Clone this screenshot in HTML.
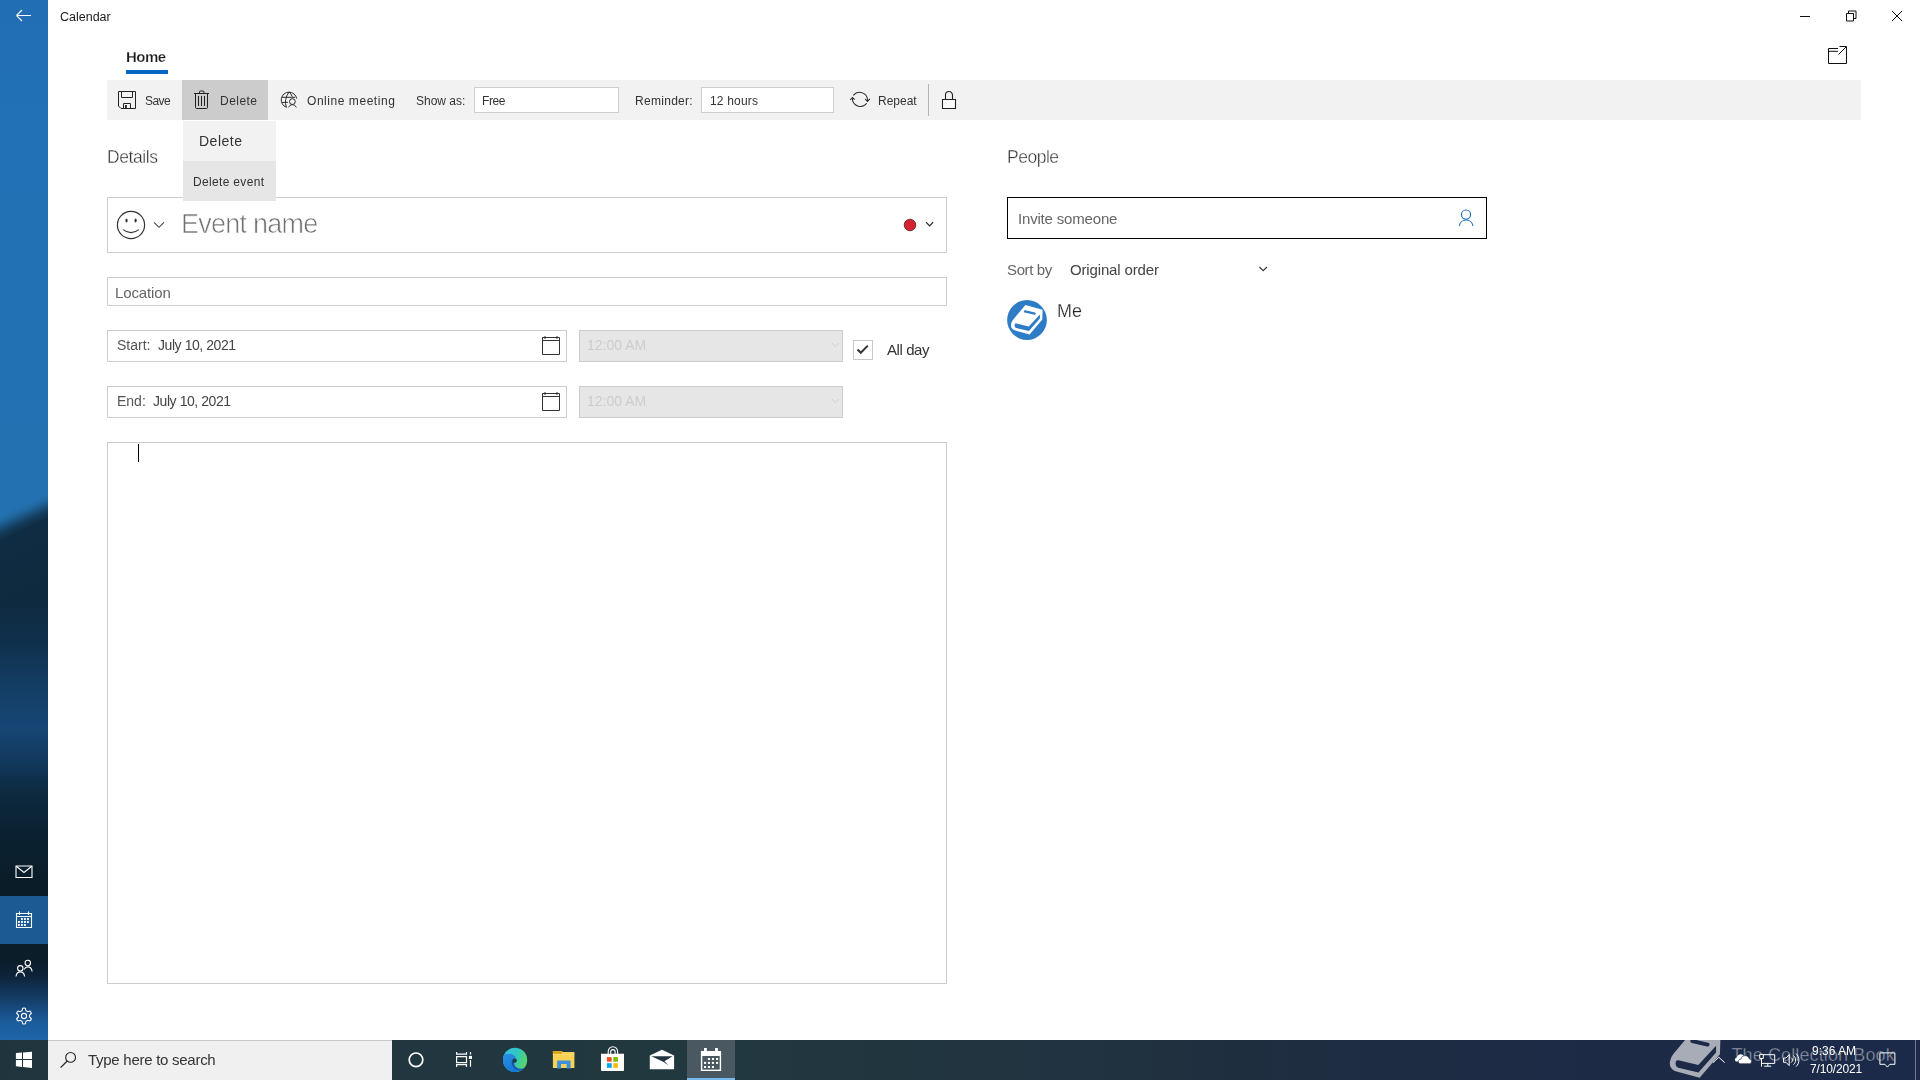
<!DOCTYPE html>
<html><head><meta charset="utf-8">
<style>
*{margin:0;padding:0;box-sizing:border-box}
html,body{width:1920px;height:1080px;overflow:hidden;background:#fff;font-family:"Liberation Sans",sans-serif;color:#333}
.a{position:absolute;white-space:nowrap;line-height:1;will-change:transform}
svg{position:absolute;overflow:visible}
#side{position:absolute;left:0;top:0;width:48px;height:1040px;
background:linear-gradient(180deg,#216eb5 0px,#2271b4 300px,#2371b0 496px,#2068a0 506px,#1a5480 514px,#123857 524px,#0f2c43 536px,#0e2a40 600px,#0f2f4a 640px,#133c62 680px,#164674 728px,#12395e 760px,#0d2a40 792px,#0b2232 830px,#0a1c28 880px,#0b1d29 960px,#0d2238 975px,#143f6a 1000px,#1b5c9c 1022px,#1f65a8 1040px)}
#calsel{position:absolute;left:0;top:896px;width:48px;height:48px;background:#1c5a94}
#tb{position:absolute;left:0;top:1040px;width:1920px;height:40px;background:linear-gradient(90deg,#20343e 0px,#22383f 700px,#213440 1000px,#1f2e3f 1250px,#1d2b45 1500px,#1c2a4a 1920px)}
.box{position:absolute;border:1px solid #cdcdcd;background:#fff}
</style></head><body>
<div id="side"></div>
<div class="a" style="left:0;top:440px;width:48px;height:160px;background:linear-gradient(155deg,#2371b0 0px,#2371b0 69px,#2068a0 74px,#1a5480 79px,#133a58 85px,#0f2c42 92px,#0e2a3f 165px)"></div>
<div id="calsel"></div>

<!-- back arrow -->
<svg style="left:0;top:0" width="48" height="32" viewBox="0 0 48 32">
<path d="M16.5 15.5H31M16.5 15.5L22 10M16.5 15.5L22 21" stroke="#fff" stroke-width="1.1" fill="none"/>
</svg>
<div class="a" style="left:60px;top:11px;font-size:12.5px;color:#1a1a1a">Calendar</div>

<!-- window buttons -->
<svg style="left:1790px;top:0" width="130" height="32" viewBox="1790 0 130 32">
<path d="M1800 16.5H1810" stroke="#111" stroke-width="1"/>
<path d="M1846.5 13.5h7v7.5h-7z M1848.5 13.5v-2.5h7.5v7.5h-2" stroke="#111" stroke-width="1" fill="none"/>
<path d="M1892 11L1902 21M1902 11L1892 21" stroke="#111" stroke-width="1"/>
</svg>

<!-- Home tab -->
<div class="a" style="left:126px;top:49px;font-size:15px;letter-spacing:-0.5px;font-weight:bold;color:#1a1a1a;-webkit-text-stroke:0.25px #fff">Home</div>
<div class="a" style="left:126px;top:70px;width:42px;height:4px;background:#0067c0"></div>

<!-- popout icon -->
<svg style="left:1820px;top:40px" width="40" height="30" viewBox="1820 40 40 30">
<path d="M1828.5 48.5V63.5H1846.5V46.5M1828.5 48.5H1838M1828.5 51.3H1838M1838.5 54.5L1846 47M1839.5 46.5H1846.5" stroke="#111" stroke-width="1" fill="none"/>
</svg>

<!-- toolbar -->
<div class="a" style="left:107px;top:80px;width:1754px;height:40px;background:#f2f2f2"></div>
<div class="a" style="left:182px;top:80px;width:86px;height:40px;background:#cccccc"></div>

<!-- toolbar icons -->
<svg style="left:110px;top:85px" width="110" height="30" viewBox="110 85 110 30">
<path d="M118.5 91.5H135.5V108.5H121L118.5 106V91.5Z" stroke="#222" stroke-width="1" fill="none"/>
<path d="M121.5 91.5V97.5H132.5V91.5" stroke="#222" stroke-width="1" fill="none"/>
<path d="M123.5 108.5V103.5H130.5V108.5" stroke="#222" stroke-width="1" fill="none"/>
<rect x="125" y="105" width="1.8" height="3.5" fill="#222"/>
</svg>
<svg style="left:190px;top:85px" width="30" height="30" viewBox="190 85 30 30">
<path d="M194 93.5H209M199.5 93.5V92a1 1 0 0 1 1-1h2.5a1 1 0 0 1 1 1v1.5" stroke="#222" stroke-width="1" fill="none"/>
<path d="M195.5 93.5V107.5a1 1 0 0 0 1 1h10a1 1 0 0 0 1-1V93.5" stroke="#222" stroke-width="1" fill="none"/>
<path d="M198.5 96V106M201.5 96V106M204.5 96V106" stroke="#222" stroke-width="1"/>
</svg>
<div class="a" style="left:145px;top:95px;font-size:12px;letter-spacing:-0.6px;color:#333">Save</div>
<div class="a" style="left:220px;top:95px;font-size:12px;letter-spacing:0.47px;color:#333">Delete</div>

<!-- online meeting -->
<svg style="left:278px;top:88px" width="24" height="24" viewBox="0 0 24 24">
<g stroke="#2a2a2a" stroke-width="1" fill="none">
<path d="M18.7 10.6A7.8 7.8 0 1 0 8.4 19.3"/>
<path d="M4 9.3H17M4 14.4H9.9"/>
<path d="M11 4Q5.6 11.5 8.4 19.3M11 4Q13.4 6 14.3 8.6"/>
<circle cx="14.4" cy="13.6" r="2.9"/>
<path d="M10.4 19.4Q11.9 16.6 14.4 16.6T18.4 19.4"/>
</g>
</svg>
<div class="a" style="left:307px;top:95px;font-size:12px;letter-spacing:0.55px;color:#333">Online meeting</div>
<div class="a" style="left:416px;top:95px;font-size:12px;color:#333">Show as:</div>
<div class="box" style="left:474px;top:87px;width:145px;height:26px;border-color:#cfcfcf"></div>
<div class="a" style="left:482px;top:95px;font-size:12px;letter-spacing:-0.43px;color:#333">Free</div>
<div class="a" style="left:635px;top:95px;font-size:12px;letter-spacing:0.29px;color:#333">Reminder:</div>
<div class="box" style="left:701px;top:87px;width:133px;height:26px;border-color:#cfcfcf"></div>
<div class="a" style="left:710px;top:95px;font-size:12px;letter-spacing:0.19px;color:#333">12 hours</div>

<!-- repeat -->
<svg style="left:848px;top:88px" width="24" height="24" viewBox="0 0 24 24">
<g stroke="#2a2a2a" stroke-width="1.05" fill="none">
<path d="M5.3 7.3A8 8 0 0 1 19.5 12.8"/>
<path d="M18.7 15.3A8 8 0 0 1 4.4 10.2"/>
<path d="M17.2 11.1L19.5 13.4L21.8 10.9M2.2 12L4.4 9.6L6.7 11.6"/>
</g>
</svg>
<div class="a" style="left:878px;top:95px;font-size:12px;color:#333">Repeat</div>
<div class="a" style="left:928px;top:84px;width:1px;height:32px;background:#b4b4b4"></div>
<svg style="left:935px;top:85px" width="30" height="30" viewBox="935 85 30 30">
<path d="M942.5 99.5h13v9h-13z" stroke="#222" stroke-width="1.1" fill="#fafafa"/>
<path d="M945.5 99.5v-4.5a3.5 3.5 0 0 1 7 0v4.5" stroke="#222" stroke-width="1.1" fill="none"/>
</svg>


<!-- Event name box -->
<div class="box" style="left:107px;top:197px;width:840px;height:56px"></div>
<svg style="left:110px;top:205px" width="60" height="40" viewBox="110 205 60 40">
<circle cx="131" cy="225" r="13.6" stroke="#333" stroke-width="1.2" fill="none"/>
<ellipse cx="126.5" cy="220.6" rx="1.1" ry="2" fill="#333"/>
<ellipse cx="135.6" cy="220.6" rx="1.1" ry="2" fill="#333"/>
<path d="M123.2 229.6Q131 235.8 138.8 229.6" stroke="#333" stroke-width="1.2" fill="none"/>
<path d="M154 222.3l5 5 5-5" stroke="#444" stroke-width="1.1" fill="none"/>
</svg>
<div class="a" style="left:181px;top:211px;font-size:27px;letter-spacing:-0.75px;color:#707070;-webkit-text-stroke:0.65px #fff">Event name</div>
<svg style="left:895px;top:210px" width="50" height="30" viewBox="895 210 50 30">
<circle cx="910" cy="225" r="5.8" fill="#d2232f" stroke="#5a1a1e" stroke-width="0.8"/>
<path d="M926 222.2l3.6 3.6 3.6-3.6" stroke="#222" stroke-width="1.2" fill="none"/>
</svg>

<!-- Location -->
<div class="box" style="left:107px;top:277px;width:840px;height:29px"></div>
<div class="a" style="left:115px;top:285px;font-size:15px;letter-spacing:-0.12px;color:#666">Location</div>

<!-- Start / End -->
<div class="box" style="left:107px;top:330px;width:460px;height:32px"></div>
<div class="a" style="left:117px;top:338px;font-size:14px;color:#555">Start:</div>
<div class="a" style="left:158px;top:338px;font-size:14px;letter-spacing:-0.43px;color:#444">July 10, 2021</div>
<div class="box" style="left:107px;top:386px;width:460px;height:32px"></div>
<div class="a" style="left:117px;top:394px;font-size:14px;color:#555">End:</div>
<div class="a" style="left:153px;top:394px;font-size:14px;letter-spacing:-0.43px;color:#444">July 10, 2021</div>
<svg style="left:535px;top:330px" width="30" height="90" viewBox="535 330 30 90">
<path d="M542.5 337.5h17v17h-17zM542.5 340.5h17M545 336v3M557 336v3" stroke="#333" stroke-width="1" fill="none"/>
<path d="M542.5 393.5h17v17h-17zM542.5 396.5h17M545 392v3M557 392v3" stroke="#333" stroke-width="1" fill="none"/>
</svg>
<div class="box" style="left:579px;top:330px;width:264px;height:32px;background:#e6e6e6;border-color:#cccccc"></div>
<div class="a" style="left:587px;top:338px;font-size:14px;color:#cdcdcd">12:00 AM</div>
<div class="box" style="left:579px;top:386px;width:264px;height:32px;background:#e6e6e6;border-color:#cccccc"></div>
<div class="a" style="left:587px;top:394px;font-size:14px;color:#cdcdcd">12:00 AM</div>
<svg style="left:825px;top:335px" width="20" height="80" viewBox="825 335 20 80">
<path d="M832 343l3.5 3.5 3.5-3.5M832 399l3.5 3.5 3.5-3.5" stroke="#cfcfcf" stroke-width="1" fill="none"/>
</svg>
<div class="box" style="left:853px;top:340px;width:20px;height:20px;border-color:#c8c8c8"></div>
<svg style="left:850px;top:337px" width="26" height="26" viewBox="850 337 26 26">
<path d="M857.5 349.5l3.3 3.3 7-7.2" stroke="#333" stroke-width="2" fill="none"/>
</svg>
<div class="a" style="left:887px;top:342px;font-size:15px;letter-spacing:-0.42px;color:#333">All day</div>

<!-- Notes -->
<div class="box" style="left:107px;top:442px;width:840px;height:542px"></div>
<div class="a" style="left:138px;top:444px;width:1.2px;height:18px;background:#000"></div>

<!-- People -->
<div class="a" style="left:1007px;top:149px;font-size:17.5px;letter-spacing:-0.48px;color:#333;-webkit-text-stroke:0.35px #fff">People</div>
<div class="a" style="left:1007px;top:197px;width:480px;height:42px;border:1px solid #000"></div>
<div class="a" style="left:1018px;top:211px;font-size:15px;letter-spacing:-0.18px;color:#666">Invite someone</div>
<svg style="left:1450px;top:205px" width="30" height="30" viewBox="1450 205 30 30">
<circle cx="1466" cy="214.6" r="4.6" stroke="#1a6fc0" stroke-width="1.1" fill="none"/>
<path d="M1459.3 225.8a6.9 6.9 0 0 1 13.6 0" stroke="#1a6fc0" stroke-width="1.1" fill="none"/>
</svg>
<div class="a" style="left:1007px;top:262px;font-size:15px;letter-spacing:-0.37px;color:#666">Sort by</div>
<div class="a" style="left:1070px;top:262px;font-size:15px;letter-spacing:-0.15px;color:#444">Original order</div>
<svg style="left:1250px;top:260px" width="20" height="20" viewBox="1250 260 20 20">
<path d="M1259.5 267l3.7 3.7 3.7-3.7" stroke="#333" stroke-width="1.1" fill="none"/>
</svg>
<svg style="left:1005px;top:298px" width="44" height="44" viewBox="0 0 44 44">
<circle cx="22" cy="22" r="19.9" fill="#2e7bc6"/>
<path d="M20.4 6.9L37.6 11.8L37.3 21.6L24.6 36.4L9.6 32.3Q5.6 30.8 6 26.5Q6.4 23.5 8.3 21.4Z" fill="#fff"/>
<path d="M9.6 27.2Q9.6 25.1 11.4 25.4L23.8 28.4L34.9 16.4L34.9 20.6L23.9 33.1L11.2 30.1Q9.6 29.7 9.6 27.2Z" fill="#2e7bc6"/>
<path d="M20 13.4L29.6 15.6" stroke="#2e7bc6" stroke-width="2.4" stroke-linecap="round"/>
</svg>
<div class="a" style="left:1057px;top:302px;font-size:18px;color:#222;-webkit-text-stroke:0.25px #fff">Me</div>

<!-- delete menu -->
<div class="a" style="left:183px;top:121px;width:93px;height:40px;background:#f2f2f2"></div>
<div class="a" style="left:183px;top:161px;width:93px;height:40px;background:#e6e6e6"></div>
<div class="a" style="left:199px;top:134px;font-size:14px;letter-spacing:0.5px;color:#333">Delete</div>
<div class="a" style="left:193px;top:176px;font-size:12px;letter-spacing:0.33px;color:#333">Delete event</div>

<!-- Details -->
<div class="a" style="left:107px;top:149px;font-size:17.5px;letter-spacing:-0.4px;color:#333;-webkit-text-stroke:0.35px #fff">Details</div>

<!-- sidebar icons -->
<svg style="left:0;top:850px" width="48" height="190" viewBox="0 850 48 190">
<path d="M16 866h16v11.5H16z" stroke="#fff" stroke-width="1.1" fill="none"/>
<path d="M16.3 866.3L24 872.5l7.7-6.2" stroke="#fff" stroke-width="1.1" fill="none"/>
<path d="M16.5 913.5h15v14h-15zM16.5 916.5h15M19.5 911.5v3.5M28.5 911.5v3.5" stroke="#fff" stroke-width="1.1" fill="none"/>
<g fill="#fff"><rect x="21" y="918" width="1.9" height="1.9"/><rect x="24" y="918" width="1.9" height="1.9"/><rect x="27" y="918" width="1.9" height="1.9"/><rect x="18" y="921" width="1.9" height="1.9"/><rect x="21" y="921" width="1.9" height="1.9"/><rect x="24" y="921" width="1.9" height="1.9"/><rect x="27" y="921" width="1.9" height="1.9"/><rect x="18" y="924" width="1.9" height="1.9"/><rect x="21" y="924" width="1.9" height="1.9"/><rect x="24" y="924" width="1.9" height="1.9"/></g>
<circle cx="20.3" cy="968.3" r="2.7" stroke="#fff" stroke-width="1.1" fill="none"/>
<path d="M16 976.5c.4-3 2-4.6 4.3-4.6s3.9 1.6 4.3 4.6" stroke="#fff" stroke-width="1.1" fill="none"/>
<circle cx="27.8" cy="963" r="2.7" stroke="#fff" stroke-width="1.1" fill="none"/>
<path d="M24.2 969.5c.8-1.8 2-2.6 3.6-2.6 2.3 0 3.9 1.6 4.3 4.6" stroke="#fff" stroke-width="1.1" fill="none"/>
<path d="M22.68 1008.21 A7.9 7.9 0 0 1 25.32 1008.21 L25.95 1010.75 A5.6 5.6 0 0 1 27.57 1011.69 L30.09 1010.96 A7.9 7.9 0 0 1 31.40 1013.25 L29.52 1015.07 A5.6 5.6 0 0 1 29.52 1016.93 L31.40 1018.75 A7.9 7.9 0 0 1 30.09 1021.04 L27.57 1020.31 A5.6 5.6 0 0 1 25.95 1021.25 L25.32 1023.79 A7.9 7.9 0 0 1 22.68 1023.79 L22.05 1021.25 A5.6 5.6 0 0 1 20.43 1020.31 L17.91 1021.04 A7.9 7.9 0 0 1 16.60 1018.75 L18.48 1016.93 A5.6 5.6 0 0 1 18.48 1015.07 L16.60 1013.25 A7.9 7.9 0 0 1 17.91 1010.96 L20.43 1011.69 A5.6 5.6 0 0 1 22.05 1010.75 L22.68 1008.21 Z" stroke="#fff" stroke-width="1.05" fill="none" stroke-linejoin="round"/>
<circle cx="24" cy="1016" r="2.6" stroke="#fff" stroke-width="1.1" fill="none"/>
</svg>

<!-- taskbar -->
<div id="tb"></div>
<svg style="left:0;top:1040px" width="48" height="40" viewBox="0 1040 48 40">
<path d="M15.9 1053L22 1052.5V1059.1H15.9zM23 1052.4L32 1051.8V1059.1H23zM15.9 1060H22V1067L15.9 1066.2zM23 1060H32V1068L23 1067.1z" fill="#fff"/>
</svg>
<div class="a" style="left:48px;top:1040px;width:344px;height:40px;background:#f0f0f0;border-top:1px solid #c9c9c9"></div>
<svg style="left:55px;top:1045px" width="30" height="30" viewBox="55 1045 30 30">
<circle cx="70.6" cy="1057.4" r="4.9" stroke="#222" stroke-width="1.1" fill="none"/>
<path d="M67.2 1061l-6.6 6.6" stroke="#222" stroke-width="1.2"/>
</svg>
<div class="a" style="left:88px;top:1052px;font-size:15px;letter-spacing:-0.27px;color:#333">Type here to search</div>

<svg style="left:392px;top:1040px" width="100" height="40" viewBox="392 1040 100 40">
<circle cx="416" cy="1059.8" r="6.8" stroke="#fff" stroke-width="1.7" fill="none"/>
<g stroke="#fff" stroke-width="1.2" fill="none">
<path d="M456.6 1052v2.2h9.9V1052M456.6 1066.9v-2.3h9.9v2.3M456.6 1056.6h9.9v6h-9.9z"/>
<path d="M470.5 1052v2.6M470.5 1060v6.8"/>
</g>
<rect x="468.9" y="1055.9" width="3.1" height="3.1" fill="#fff"/>
</svg>
<!-- edge -->
<svg style="left:498px;top:1044px" width="34" height="32" viewBox="0 0 34 32">
<defs>
<linearGradient id="eg1" x1="0" y1="0.2" x2="1" y2="0.6"><stop offset="0" stop-color="#36c3f0"/><stop offset=".5" stop-color="#2fc6c0"/><stop offset="1" stop-color="#5cd865"/></linearGradient>
<linearGradient id="eg2" x1="0" y1="0" x2="0.6" y2="1"><stop offset="0" stop-color="#2a8fe0"/><stop offset="1" stop-color="#1276d8"/></linearGradient>
</defs>
<circle cx="17.1" cy="15.9" r="12.1" fill="url(#eg1)"/>
<path d="M5.1 12.2C7 9.5 12.5 9 15.5 11C17.5 12.3 18.6 14.5 17.4 16.8L17 17.4C15.5 19.5 16 22.5 19 24.5C21.5 26 25 25.5 26.9 23.6C24.6 26.5 21 28 17.1 28C10.4 28 5 22.6 5 15.9C5 14.6 5.1 13.4 5.1 12.2Z" fill="url(#eg2)"/>
<path d="M13.8 17C13.2 20.5 14.8 24.3 19 25.8C22 26.8 25.3 25.9 26.9 23.6C24.5 25.2 21 25.2 18.6 23.6C16.2 22 15.6 19.6 16.4 17.6Z" fill="#1a56ac"/>
<circle cx="16.6" cy="16.6" r="2.2" fill="#1f3a48"/>
</svg>
<!-- explorer -->
<svg style="left:548px;top:1046px" width="32" height="28" viewBox="0 0 32 28">
<path d="M4.9 5.4c0-.3.2-.5.5-.5h8.2l1.4 1.1h11c.3 0 .4.2.4.4V22H4.9z" fill="#f8d254"/>
<path d="M4.9 5.4c0-.3.2-.5.5-.5h8l.6 1v2H4.9z" fill="#dea21e"/>
<path d="M4.9 7.8h21.5V9H4.9z" fill="#fbe07c" opacity=".6"/>
<path d="M9.1 22.6v-7.6c0-.3.2-.5.5-.5h12.5c.3 0 .5.2.5.5v7.6h-4v-4.5h-5.5v4.5z" fill="#3f90da"/>
</svg>
<!-- store -->
<svg style="left:596px;top:1044px" width="34" height="30" viewBox="0 0 34 30">
<path d="M12.2 10V7.5a4.7 4.7 0 0 1 9.4 0V10M14.7 10V7.8a2.2 2.2 0 0 1 4.4 0V10" stroke="#fff" stroke-width="1.1" fill="none"/>
<path d="M5 9.8h23v16.1c0 .6-.5 1-1 1H6c-.6 0-1-.4-1-1z" fill="#fff"/>
<rect x="10.9" y="13.1" width="4.8" height="4.6" fill="#f25022"/>
<rect x="17.3" y="13.1" width="4.6" height="4.6" fill="#7fba00"/>
<rect x="10.9" y="19.2" width="4.8" height="4.6" fill="#00a4ef"/>
<rect x="17.3" y="19.2" width="4.6" height="4.6" fill="#ffb900"/>
</svg>
<!-- mail -->
<svg style="left:645px;top:1044px" width="34" height="30" viewBox="645 1044 34 30">
<path d="M649.8 1055.6l12.2-5.8 12.1 5.8v13.6h-24.3z" fill="#fff"/>
<path d="M651.3 1056.2h21.3l-8.2 5.1 4.4 4.1-5.6-3.6z" fill="#223540"/>
</svg>
<!-- calendar active -->
<div class="a" style="left:687px;top:1040px;width:48px;height:40px;background:#4a5862"></div>
<div class="a" style="left:687px;top:1078px;width:48px;height:2px;background:#76b9ed"></div>
<svg style="left:694px;top:1044px" width="34" height="30" viewBox="694 1044 34 30">
<path d="M700.9 1050.9h3.1v-2.9h2.8v2.9h8.3v-2.9h2.8v2.9h3.2v20h-20.2z" fill="#fff"/>
<rect x="702.3" y="1056" width="17.4" height="13.6" fill="#4a5862"/>
<g fill="#fff">
<rect x="707.9" y="1058" width="2.1" height="2"/><rect x="711.9" y="1058" width="2.1" height="2"/><rect x="716" y="1058" width="2.1" height="2"/>
<rect x="704" y="1061.9" width="2.1" height="2"/><rect x="707.9" y="1061.9" width="2.1" height="2"/><rect x="711.9" y="1061.9" width="2.1" height="2"/><rect x="716" y="1061.9" width="2.1" height="2"/>
<rect x="704" y="1066" width="2.1" height="2"/><rect x="707.9" y="1066" width="2.1" height="2"/><rect x="711.9" y="1066" width="2.1" height="2"/>
</g>
</svg>

<!-- tray -->
<svg style="left:1660px;top:1040px" width="260" height="40" viewBox="1660 1040 260 40">
<defs><clipPath id="tbclip"><rect x="1660" y="1040" width="260" height="40"/></clipPath></defs>
<g clip-path="url(#tbclip)">
<g transform="translate(1660.24 1019.6) scale(1.6)">
<path d="M20.4 6.9L37.6 11.8L37.3 21.6L24.6 36.4L9.6 32.3Q5.6 30.8 6 26.5Q6.4 23.5 8.3 21.4Z" fill="#a7acb7"/>
<path d="M9.6 27.2Q9.6 25.1 11.4 25.4L23.8 28.4L34.9 16.4L34.9 20.6L23.9 33.1L11.2 30.1Q9.6 29.7 9.6 27.2Z" fill="#1c2a48"/>
<path d="M20 13.4L29.6 15.6" stroke="#1c2a48" stroke-width="2.4" stroke-linecap="round"/>
</g>
<text x="1731.5" y="1060.7" font-family="Liberation Sans" font-size="18" fill="#9aa2b3" stroke="#1d2b47" stroke-width="0.5" letter-spacing="0.12">The Collection Book</text>
</g>
<path d="M1713 1062.7L1718.8 1057.2L1724.7 1062.7" stroke="#fff" stroke-width="1" fill="none"/>
<path d="M1736.8 1061.6c-1.2 0-1.9-.9-1.9-1.9 0-1.1.8-2 1.9-2 .4-1.9 1.9-3.5 3.9-3.5 1.6 0 2.9.9 3.5 2.3L1744 1061.6z" fill="#fff"/>
<path d="M1740.6 1063.8c-1.4 0-2.3-1-2.3-2.3 0-1.3 1-2.3 2.3-2.3h.2c.5-2.1 2.2-3.6 4.3-3.6 2 0 3.7 1.3 4.2 3.2 1.3.2 2.3 1.3 2.3 2.6 0 1.4-1.1 2.4-2.5 2.4z" fill="#fff" stroke="#1d2b47" stroke-width="0.7"/>
<g stroke="#fff" stroke-width="1" fill="none">
<path d="M1762.5 1054.7H1774.7V1063.4H1762M1761.5 1058.5V1066.6M1767.8 1063.4V1066.2M1764.2 1066.2H1771.2"/>
<path d="M1759.7 1054.4h3.6v4.1h-3.6z" fill="#1d2b47"/>
<path d="M1783.5 1058H1786L1789.2 1054.6V1065.6L1786 1062.3H1783.5Z"/>
<path d="M1791.2 1057.6c.8.7 1.2 1.5 1.2 2.5s-.4 1.8-1.2 2.5M1793.5 1055.6c1.4 1.2 2.1 2.7 2.1 4.5s-.7 3.3-2.1 4.5M1796 1053.6c2 1.7 2.9 3.9 2.9 6.5s-1 4.8-2.9 6.5"/>
</g>
<path d="M1879.9 1052.9h15v11.4h-5l-2.5 2.8-2.5-2.8h-5z" stroke="#fff" stroke-width="1" fill="none"/>
<path d="M1915.5 1040v40" stroke="#737b8c" stroke-width="1"/>
</svg>
<div class="a" style="left:1812px;top:1045px;font-size:12px;color:#fff">9:36 AM</div>
<div class="a" style="left:1810px;top:1063px;font-size:12px;letter-spacing:-0.15px;color:#fff">7/10/2021</div>
</body></html>
